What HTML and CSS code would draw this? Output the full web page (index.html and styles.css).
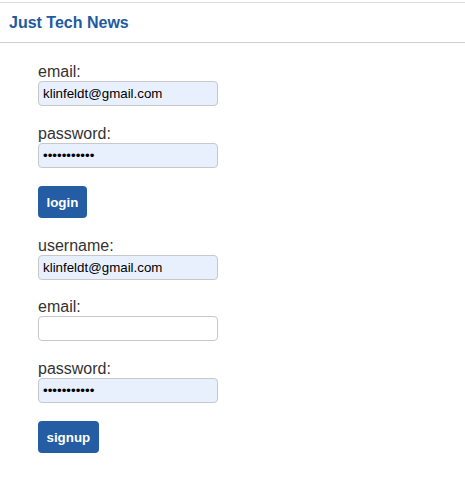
FILE: index.html
```html
<!DOCTYPE html>
<html>
<head>
<meta charset="utf-8">
<link rel="stylesheet" href="styles.css">
</head>
<body>
<header class="site-header">
  <h1 class="site-title">Just Tech News</h1>
</header>
<main class="content">
  <form class="auth-form">
    <div class="field">
      <label class="field-label" for="login-email">email:</label>
      <input class="field-input filled" id="login-email" type="text" value="klinfeldt@gmail.com">
    </div>
    <div class="field">
      <label class="field-label" for="login-password">password:</label>
      <input class="field-input filled" id="login-password" type="password" value="password123">
    </div>
    <div class="field">
      <button class="btn" type="button">login</button>
    </div>
  </form>
  <form class="auth-form">
    <div class="field">
      <label class="field-label" for="signup-username">username:</label>
      <input class="field-input filled" id="signup-username" type="text" value="klinfeldt@gmail.com">
    </div>
    <div class="field">
      <label class="field-label" for="signup-email">email:</label>
      <input class="field-input" id="signup-email" type="text" value="">
    </div>
    <div class="field">
      <label class="field-label" for="signup-password">password:</label>
      <input class="field-input filled" id="signup-password" type="password" value="password123">
    </div>
    <div class="field">
      <button class="btn" type="button">signup</button>
    </div>
  </form>
</main>
</body>
</html>
```
FILE: styles.css
```css
html, body {
  margin: 0;
  padding: 0;
  background: #fff;
}
body {
  font-family: "Liberation Sans", Arial, sans-serif;
  color: #333;
}
.site-header {
  margin-top: 2px;
  height: 39px;
  border-top: 1px solid #dcdcdc;
  border-bottom: 1px solid #cfcfcf;
  display: flex;
  align-items: center;
  padding: 0 9px;
}
.site-title {
  margin: 0;
  font-size: 16px;
  font-weight: bold;
  color: #215b9f;
}
.content {
  padding: 20px 38px 0;
}
.auth-form {
  display: flex;
  flex-direction: column;
  align-items: flex-start;
}
.field {
  display: flex;
  flex-direction: column;
  align-items: flex-start;
  margin-bottom: 18.5px;
}
.field-label {
  font-size: 16px;
  line-height: 18px;
  color: #333;
}
.field-input {
  box-sizing: border-box;
  width: 180px;
  height: 25px;
  margin: 0;
  padding: 0 4px;
  border: 1px solid #c8c8c8;
  border-radius: 4px;
  background: #fff;
  font-family: "Liberation Sans", Arial, sans-serif;
  font-size: 13.33px;
  color: #000;
  outline: none;
}
.field-input.filled {
  background: #e8f0fe;
}
.btn {
  height: 32px;
  padding: 0 8.5px;
  border: none;
  border-radius: 4px;
  background: #245da4;
  color: #fff;
  font-family: "Liberation Sans", Arial, sans-serif;
  font-size: 13.33px;
  font-weight: bold;
  cursor: pointer;
}
```
